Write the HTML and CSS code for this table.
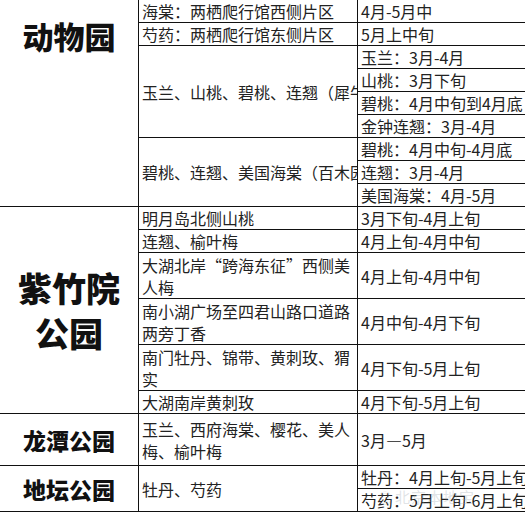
FILE: index.html
```html
<!DOCTYPE html>
<html lang="zh">
<head>
<meta charset="utf-8">
<link rel="stylesheet" href="styles.css">
</head>
<body>
<div class="page">
<table class="tbl">
  <colgroup><col class="c1"><col class="c2"><col class="c3"></colgroup>
  <tr class="r">
    <td class="park park-top" rowspan="9"><div class="big">动物园</div></td>
    <td class="d">海棠：两栖爬行馆西侧片区</td>
    <td class="d">4月-5月中</td>
  </tr>
  <tr class="r">
    <td class="d">芍药：两栖爬行馆东侧片区</td>
    <td class="d">5月上中旬</td>
  </tr>
  <tr class="r">
    <td class="d" rowspan="4"><div class="clip">玉兰、山桃、碧桃、连翘（犀牛园）</div></td>
    <td class="d">玉兰：3月-4月</td>
  </tr>
  <tr class="r"><td class="d">山桃：3月下旬</td></tr>
  <tr class="r"><td class="d">碧桃：4月中旬到4月底</td></tr>
  <tr class="r"><td class="d">金钟连翘：3月-4月</td></tr>
  <tr class="r">
    <td class="d" rowspan="3"><div class="clip">碧桃、连翘、美国海棠（百木园）</div></td>
    <td class="d">碧桃：4月中旬-4月底</td>
  </tr>
  <tr class="r"><td class="d">连翘：3月-4月</td></tr>
  <tr class="r"><td class="d">美国海棠：4月-5月</td></tr>

  <tr class="r">
    <td class="park" rowspan="6"><div class="mid">紫竹院<br>公园</div></td>
    <td class="d">明月岛北侧山桃</td>
    <td class="d">3月下旬-4月上旬</td>
  </tr>
  <tr class="r">
    <td class="d">连翘、榆叶梅</td>
    <td class="d">4月上旬-4月中旬</td>
  </tr>
  <tr class="r2">
    <td class="d">大湖北岸“跨海东征”西侧美人梅</td>
    <td class="d">4月上旬-4月中旬</td>
  </tr>
  <tr class="r2">
    <td class="d">南小湖广场至四君山路口道路两旁丁香</td>
    <td class="d">4月中旬-4月下旬</td>
  </tr>
  <tr class="r2">
    <td class="d">南门牡丹、锦带、黄刺玫、猬实</td>
    <td class="d">4月下旬-5月上旬</td>
  </tr>
  <tr class="r">
    <td class="d">大湖南岸黄刺玫</td>
    <td class="d">4月下旬-5月上旬</td>
  </tr>

  <tr class="r3">
    <td class="park"><div class="small">龙潭公园</div></td>
    <td class="d">玉兰、西府海棠、樱花、美人梅、榆叶梅</td>
    <td class="d">3月—5月</td>
  </tr>

  <tr class="r">
    <td class="park" rowspan="2"><div class="small">地坛公园</div></td>
    <td class="d" rowspan="2">牡丹、芍药</td>
    <td class="d nw">牡丹：4月上旬-5月上旬</td>
  </tr>
  <tr class="r">
    <td class="d nw">芍药：5月上旬-6月上旬</td>
  </tr>
</table>
<div class="mark"><span class="mark-ico">◎</span>北京本地宝</div>
</div>
</body>
</html>
```

FILE: styles.css
```css
html, body {
  margin: 0;
  padding: 0;
  background: #ffffff;
}
body {
  width: 525px;
  height: 515px;
  overflow: hidden;
  font-family: "Noto Sans CJK SC", "Noto Sans", sans-serif;
  color: #222;
}
.page {
  position: relative;
  width: 525px;
  height: 515px;
  overflow: hidden;
}
.tbl {
  border-collapse: collapse;
  table-layout: fixed;
  width: 700px;
  margin-left: -1px;
  margin-top: -1px;
}
.c1 { width: 139px; }
.c2 { width: 219px; }
.c3 { width: 342px; }
.tbl td {
  border: 1px solid #111;
  padding: 0 0 0 3px;
  vertical-align: middle;
  font-size: 16px;
  line-height: 22px;
  overflow: hidden;
}
.tbl td.park {
  padding: 0;
  text-align: center;
  font-weight: 900;
  color: #111;
}
.tbl td.park-top {
  vertical-align: top;
}
.tbl td:nth-child(3), .tbl tr.r td:only-child, .tbl td.nw {
  white-space: nowrap;
}
.r { height: 23px; }
.r2 { height: 46px; }
.r3 { height: 52px; }
.clip {
  white-space: nowrap;
  overflow: hidden;
  width: 215px;
}
.big {
  font-size: 31px;
  line-height: 32px;
  padding-top: 20px;
}
.mid {
  font-size: 34px;
  line-height: 45px;
}
.small {
  font-size: 23px;
  line-height: 28px;
}
.mark {
  position: absolute;
  left: 378px;
  top: 486px;
  font-size: 15px;
  color: rgba(150, 160, 170, 0.3);
  letter-spacing: 1px;
}
.mark-ico {
  font-size: 14px;
  margin-right: 2px;
}
```
